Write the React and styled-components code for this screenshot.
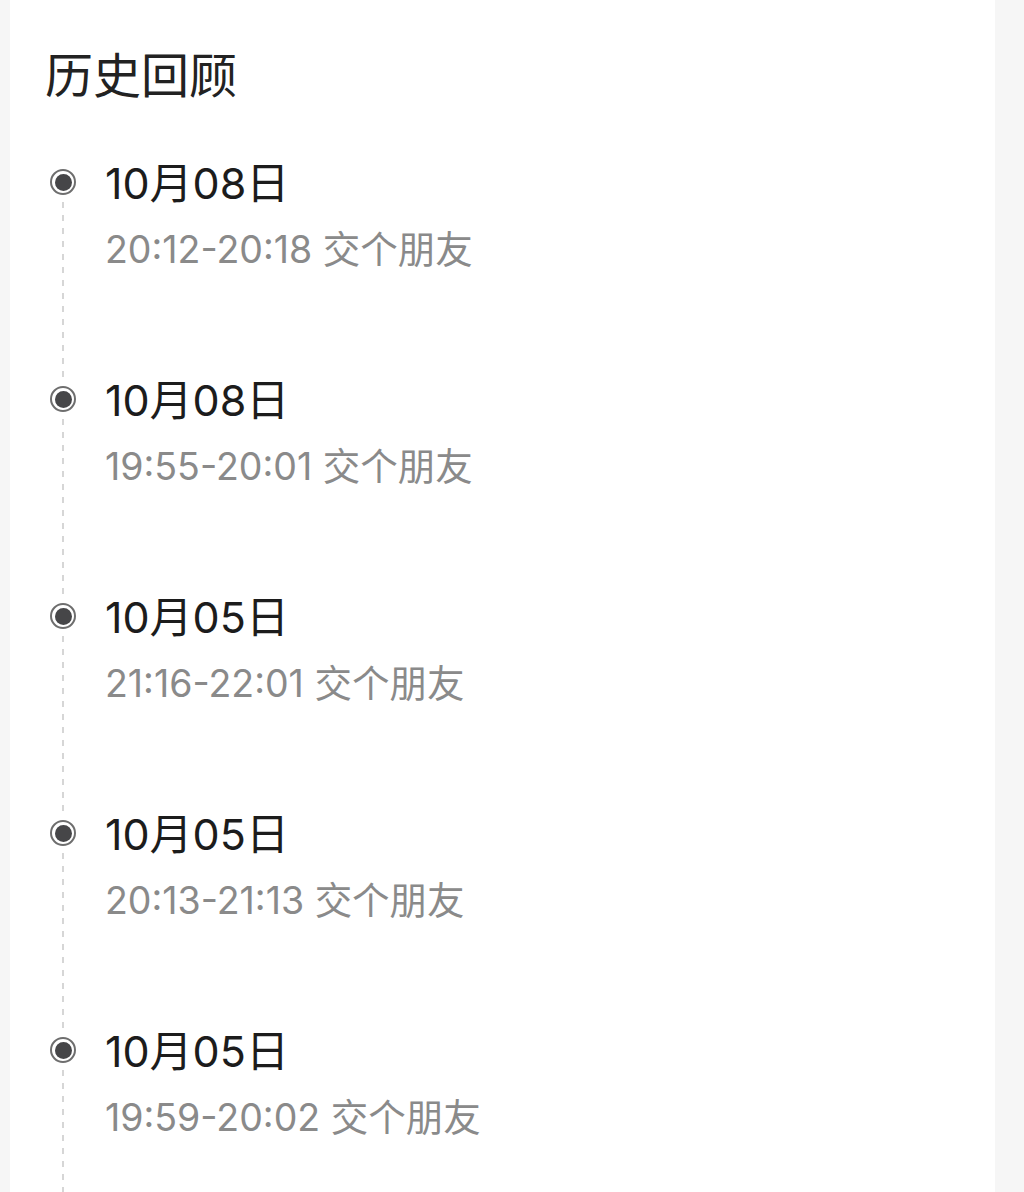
import styled, { createGlobalStyle } from "styled-components";

const GlobalStyle = createGlobalStyle`
  html, body {
    margin: 0;
    padding: 0;
    background: #f6f6f6;
    font-family: Inter, "Noto Sans CJK SC", "Noto Sans", sans-serif;
  }
`;

const records = [
  { date: "10月08日", time: "20:12-20:18", title: "交个朋友" },
  { date: "10月08日", time: "19:55-20:01", title: "交个朋友" },
  { date: "10月05日", time: "21:16-22:01", title: "交个朋友" },
  { date: "10月05日", time: "20:13-21:13", title: "交个朋友" },
  { date: "10月05日", time: "19:59-20:02", title: "交个朋友" },
];

const History = () => {
  return (
    <Card>
      <Heading>历史回顾</Heading>
      <Timeline>
        {records.map((r, i) => (
          <Item key={i}>
            <Marker>
              <Dot />
              <Dash />
            </Marker>
            <Body>
              <DateText>{r.date}</DateText>
              <Sub>
                {r.time} {r.title}
              </Sub>
            </Body>
          </Item>
        ))}
      </Timeline>
    </Card>
  );
};

const App = () => (
  <>
    <GlobalStyle />
    <Page>
      <History />
    </Page>
  </>
);

const Page = styled.div`
  height: 1192px;
  overflow: hidden;
  padding-left: 10px;
  padding-right: 29px;
`;

const Card = styled.section`
  background: #fff;
  height: 100%;
  padding: 41px 0 0 35px;
  box-sizing: border-box;
`;

const Heading = styled.h2`
  margin: 0;
  font-family: "Noto Sans CJK SC", sans-serif;
  font-size: 48px;
  line-height: 62px;
  font-weight: 400;
  color: #222;
`;

const Timeline = styled.div`
  margin-top: 51px;
  display: flex;
  flex-direction: column;
`;

const Item = styled.div`
  display: grid;
  grid-template-columns: 36px 1fr;
  column-gap: 24px;
  height: 217px;
`;

const Marker = styled.div`
  display: flex;
  flex-direction: column;
  align-items: center;
  padding-top: 15px;
`;

const Dot = styled.span`
  width: 26px;
  height: 26px;
  border-radius: 50%;
  border: 2px solid #6e6e6e;
  box-sizing: border-box;
  display: flex;
  align-items: center;
  justify-content: center;
  flex-shrink: 0;

  &::after {
    content: "";
    width: 17px;
    height: 17px;
    border-radius: 50%;
    background: #464648;
  }
`;

const Dash = styled.span`
  flex: 1;
  width: 2px;
  margin: 7px 0 -10px;
  background: repeating-linear-gradient(
    to bottom,
    #d6d6d6 0 6px,
    transparent 6px 13px
  );
`;

const Body = styled.div`
  display: flex;
  flex-direction: column;
`;

const DateText = styled.div`
  font-size: 43px;
  line-height: 56px;
  margin-top: 1px;
  color: #1c1c1c;
`;

const Sub = styled.div`
  margin-top: 14px;
  font-size: 37.5px;
  line-height: 50px;
  color: #8a8a8a;
`;

export default App;
